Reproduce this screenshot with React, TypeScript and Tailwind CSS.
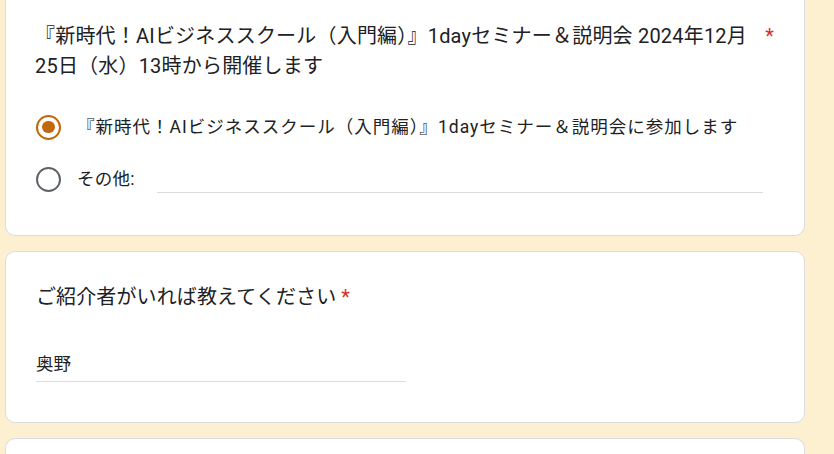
import React from "react";

const font = { fontFamily: 'Roboto, "Noto Sans CJK JP", "Noto Sans", sans-serif' };

function Radio({ checked }: { checked?: boolean }) {
  return (
    <span
      className={
        "flex h-[25px] w-[25px] shrink-0 items-center justify-center rounded-full border-[2.5px] " +
        (checked ? "border-[#c1680b]" : "border-[#5f6368]")
      }
    >
      {checked && <span className="h-[12.5px] w-[12.5px] rounded-full bg-[#c1680b]" />}
    </span>
  );
}

export default function App() {
  return (
    <div className="h-[454px] w-[834px] overflow-hidden bg-[#fcf0d0] text-[#202124]" style={font}>
      <div className="flex w-[805px] flex-col gap-[15px] pl-[5px]">
        {/* Card 1 */}
        <div className="-mt-[9px] rounded-b-[10px] border border-t-0 border-[#dadce0] bg-white px-[30px] pb-[30px] pt-[30px]">
          <div className="flex text-[20px] leading-[30px] tracking-[0.2px]">
            <div className="flex-1 -ml-px">
              『新時代！AIビジネススクール（入門編）』1dayセミナー＆説明会 2024年12月
              <br />
              25日（水）13時から開催します
            </div>
            <span className="pl-[5px] text-[#d93025]">*</span>
          </div>
          <div className="mt-[20px] flex flex-col">
            <div className="flex h-[52px] items-center gap-[16px]">
              <Radio checked />
              <span className="text-[17.5px] leading-[25px] tracking-[1px]">
                『新時代！AIビジネススクール（入門編）』1dayセミナー＆説明会に参加します
              </span>
            </div>
            <div className="flex h-[52px] items-center gap-[16px]">
              <Radio />
              <span className="text-[17.5px] leading-[25px] tracking-[0.25px]">その他:</span>
              <div className="ml-[6px] mt-[26px] h-px w-[606px] bg-[#dadce0]" />
            </div>
          </div>
        </div>

        {/* Card 2 */}
        <div className="rounded-[10px] border border-[#dadce0] bg-white px-[30px] pb-[40px] pt-[30px]">
          <div className="text-[20px] leading-[30px] tracking-[0.125px]">
            ご紹介者がいれば教えてください<span className="pl-[5px] text-[#d93025]">*</span>
          </div>
          <div className="mt-[34px] w-[370px] border-b border-[#dadce0] pb-[4px] pt-[6px] text-[17.5px] leading-[25px]">
            奥野
          </div>
        </div>

        {/* Card 3 */}
        <div className="h-[60px] rounded-t-[10px] border border-b-0 border-[#dadce0] bg-white" />
      </div>
    </div>
  );
}
